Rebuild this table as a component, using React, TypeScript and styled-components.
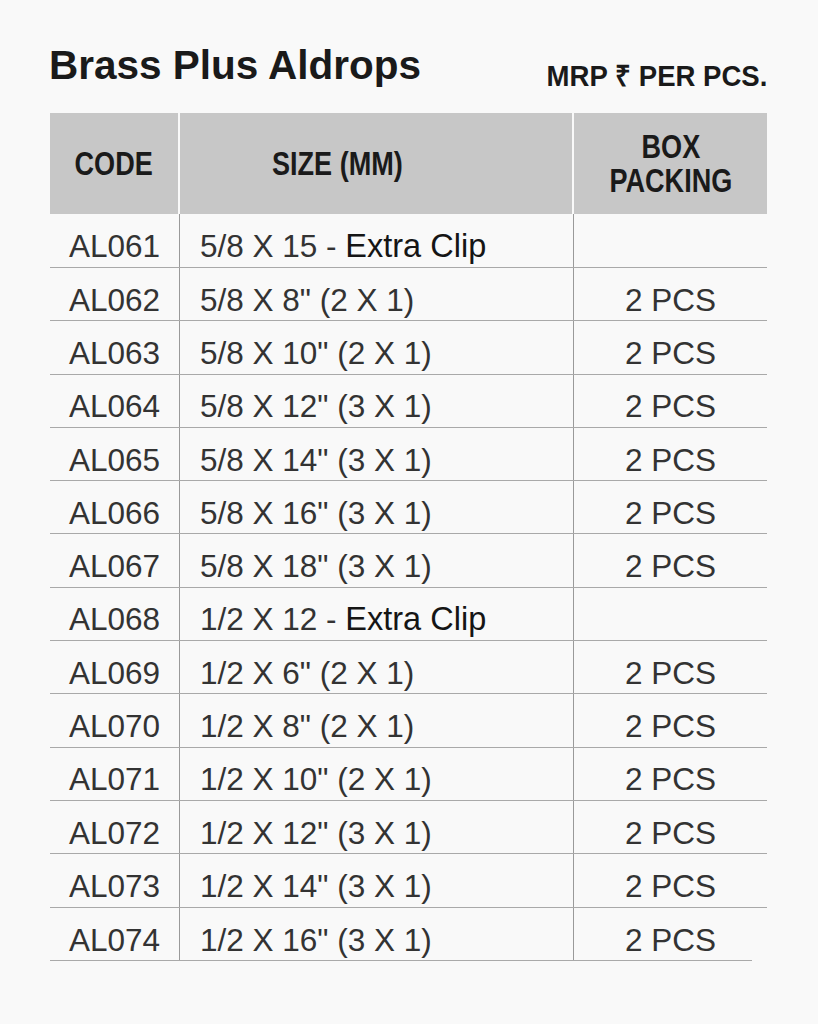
import React from "react";
import styled, { createGlobalStyle } from "styled-components";

const Global = createGlobalStyle`
  html, body { margin: 0; padding: 0; background: #f9f9f9; }
  body { font-family: "Liberation Sans", Arial, sans-serif; color: #222; }
`;

const Page = styled.div`
  width: 818px;
  height: 1024px;
  box-sizing: border-box;
  padding: 40px 51px 0 49px;
  background: #f9f9f9;
`;

const TitleRow = styled.div`
  display: flex;
  justify-content: space-between;
  align-items: baseline;
  height: 73px;
`;

const Title = styled.h1`
  margin: 0;
  font-family: "Liberation Sans", Arial, sans-serif;
  font-weight: 700;
  font-size: 40.5px;
  line-height: 50px;
  color: #1a1a1a;
`;

const Mrp = styled.div`
  font-family: "Liberation Sans", Arial, sans-serif;
  font-weight: 700;
  font-size: 29px;
  line-height: 48px;
  color: #1a1a1a;
  position: relative;
  top: 7px;
  transform: scaleX(0.95);
  transform-origin: right center;
  white-space: nowrap;
`;

const Table = styled.div`
  margin-left: 1px;
  width: 717px;
`;

const HeaderRow = styled.div`
  display: grid;
  grid-template-columns: 128px 392px 193px;
  column-gap: 2px;
  height: 101px;
`;

const HeadCell = styled.div<{ $align?: string; $pad?: number }>`
  background: #c7c7c7;
  display: flex;
  align-items: center;
  justify-content: ${(p) => p.$align || "center"};
  padding-left: ${(p) => p.$pad || 0}px;
  text-align: center;
`;

const HeadText = styled.span<{ $origin?: string }>`
  display: inline-block;
  font-family: "Liberation Sans", Arial, sans-serif;
  font-weight: 700;
  font-size: 33px;
  line-height: 34px;
  color: #1a1a1a;
  white-space: nowrap;
  transform: scaleX(0.82);
  transform-origin: ${(p) => p.$origin || "center"} center;
`;

const Row = styled.div<{ $first?: boolean; $last?: boolean }>`
  display: grid;
  grid-template-columns: 129px 394px 194px;
  height: ${(p) => (p.$first ? 54 : 53.3)}px;
  box-sizing: border-box;
  position: relative;
  border-bottom: ${(p) => (p.$last ? "none" : "1px solid #a9a9a9")};
  ${(p) =>
    p.$last
      ? `&::after { content: ""; position: absolute; left: 0; bottom: 0; width: 702px; height: 1px; background: #a9a9a9; }`
      : ""}
`;

const Cell = styled.div<{ $align: "left" | "center"; $line?: boolean }>`
  display: flex;
  align-items: center;
  justify-content: ${(p) => (p.$align === "center" ? "center" : "flex-start")};
  padding-left: ${(p) => (p.$align === "left" ? "20px" : "0")};
  padding-top: 11px;
  box-sizing: border-box;
  border-left: ${(p) => (p.$line ? "1px solid #9a9a9a" : "none")};
  font-family: "Liberation Sans", Arial, sans-serif;
  font-size: 31.5px;
  line-height: 36px;
  color: #333;
  white-space: nowrap;
`;

const Extra = styled.span`
  color: #151515;
  font-size: 32.5px;
`;

const rows: [string, string, string, string?][] = [
  ["AL061", "5/8 X 15 - ", "", "Extra Clip"],
  ["AL062", '5/8 X 8" (2 X 1)', "2 PCS"],
  ["AL063", '5/8 X 10" (2 X 1)', "2 PCS"],
  ["AL064", '5/8 X 12" (3 X 1)', "2 PCS"],
  ["AL065", '5/8 X 14" (3 X 1)', "2 PCS"],
  ["AL066", '5/8 X 16" (3 X 1)', "2 PCS"],
  ["AL067", '5/8 X 18" (3 X 1)', "2 PCS"],
  ["AL068", "1/2 X 12 - ", "", "Extra Clip"],
  ["AL069", '1/2 X 6" (2 X 1)', "2 PCS"],
  ["AL070", '1/2 X 8" (2 X 1)', "2 PCS"],
  ["AL071", '1/2 X 10" (2 X 1)', "2 PCS"],
  ["AL072", '1/2 X 12" (3 X 1)', "2 PCS"],
  ["AL073", '1/2 X 14" (3 X 1)', "2 PCS"],
  ["AL074", '1/2 X 16" (3 X 1)', "2 PCS"],
];

export default function App() {
  return (
    <Page>
      <Global />
      <TitleRow>
        <Title>Brass Plus Aldrops</Title>
        <Mrp>MRP ₹ PER PCS.</Mrp>
      </TitleRow>
      <Table>
        <HeaderRow>
          <HeadCell>
            <HeadText>CODE</HeadText>
          </HeadCell>
          <HeadCell $align="flex-start" $pad={92}>
            <HeadText $origin="left">SIZE (MM)</HeadText>
          </HeadCell>
          <HeadCell>
            <HeadText>
              BOX
              <br />
              PACKING
            </HeadText>
          </HeadCell>
        </HeaderRow>
        {rows.map(([code, size, box, extra], i) => (
          <Row key={code} $first={i === 0} $last={i === rows.length - 1}>
            <Cell $align="center">{code}</Cell>
            <Cell $align="left" $line>
              <span style={{ whiteSpace: "pre" }}>{size}</span>
              {extra && <Extra>{extra}</Extra>}
            </Cell>
            <Cell $align="center" $line>
              {box}
            </Cell>
          </Row>
        ))}
      </Table>
    </Page>
  );
}
